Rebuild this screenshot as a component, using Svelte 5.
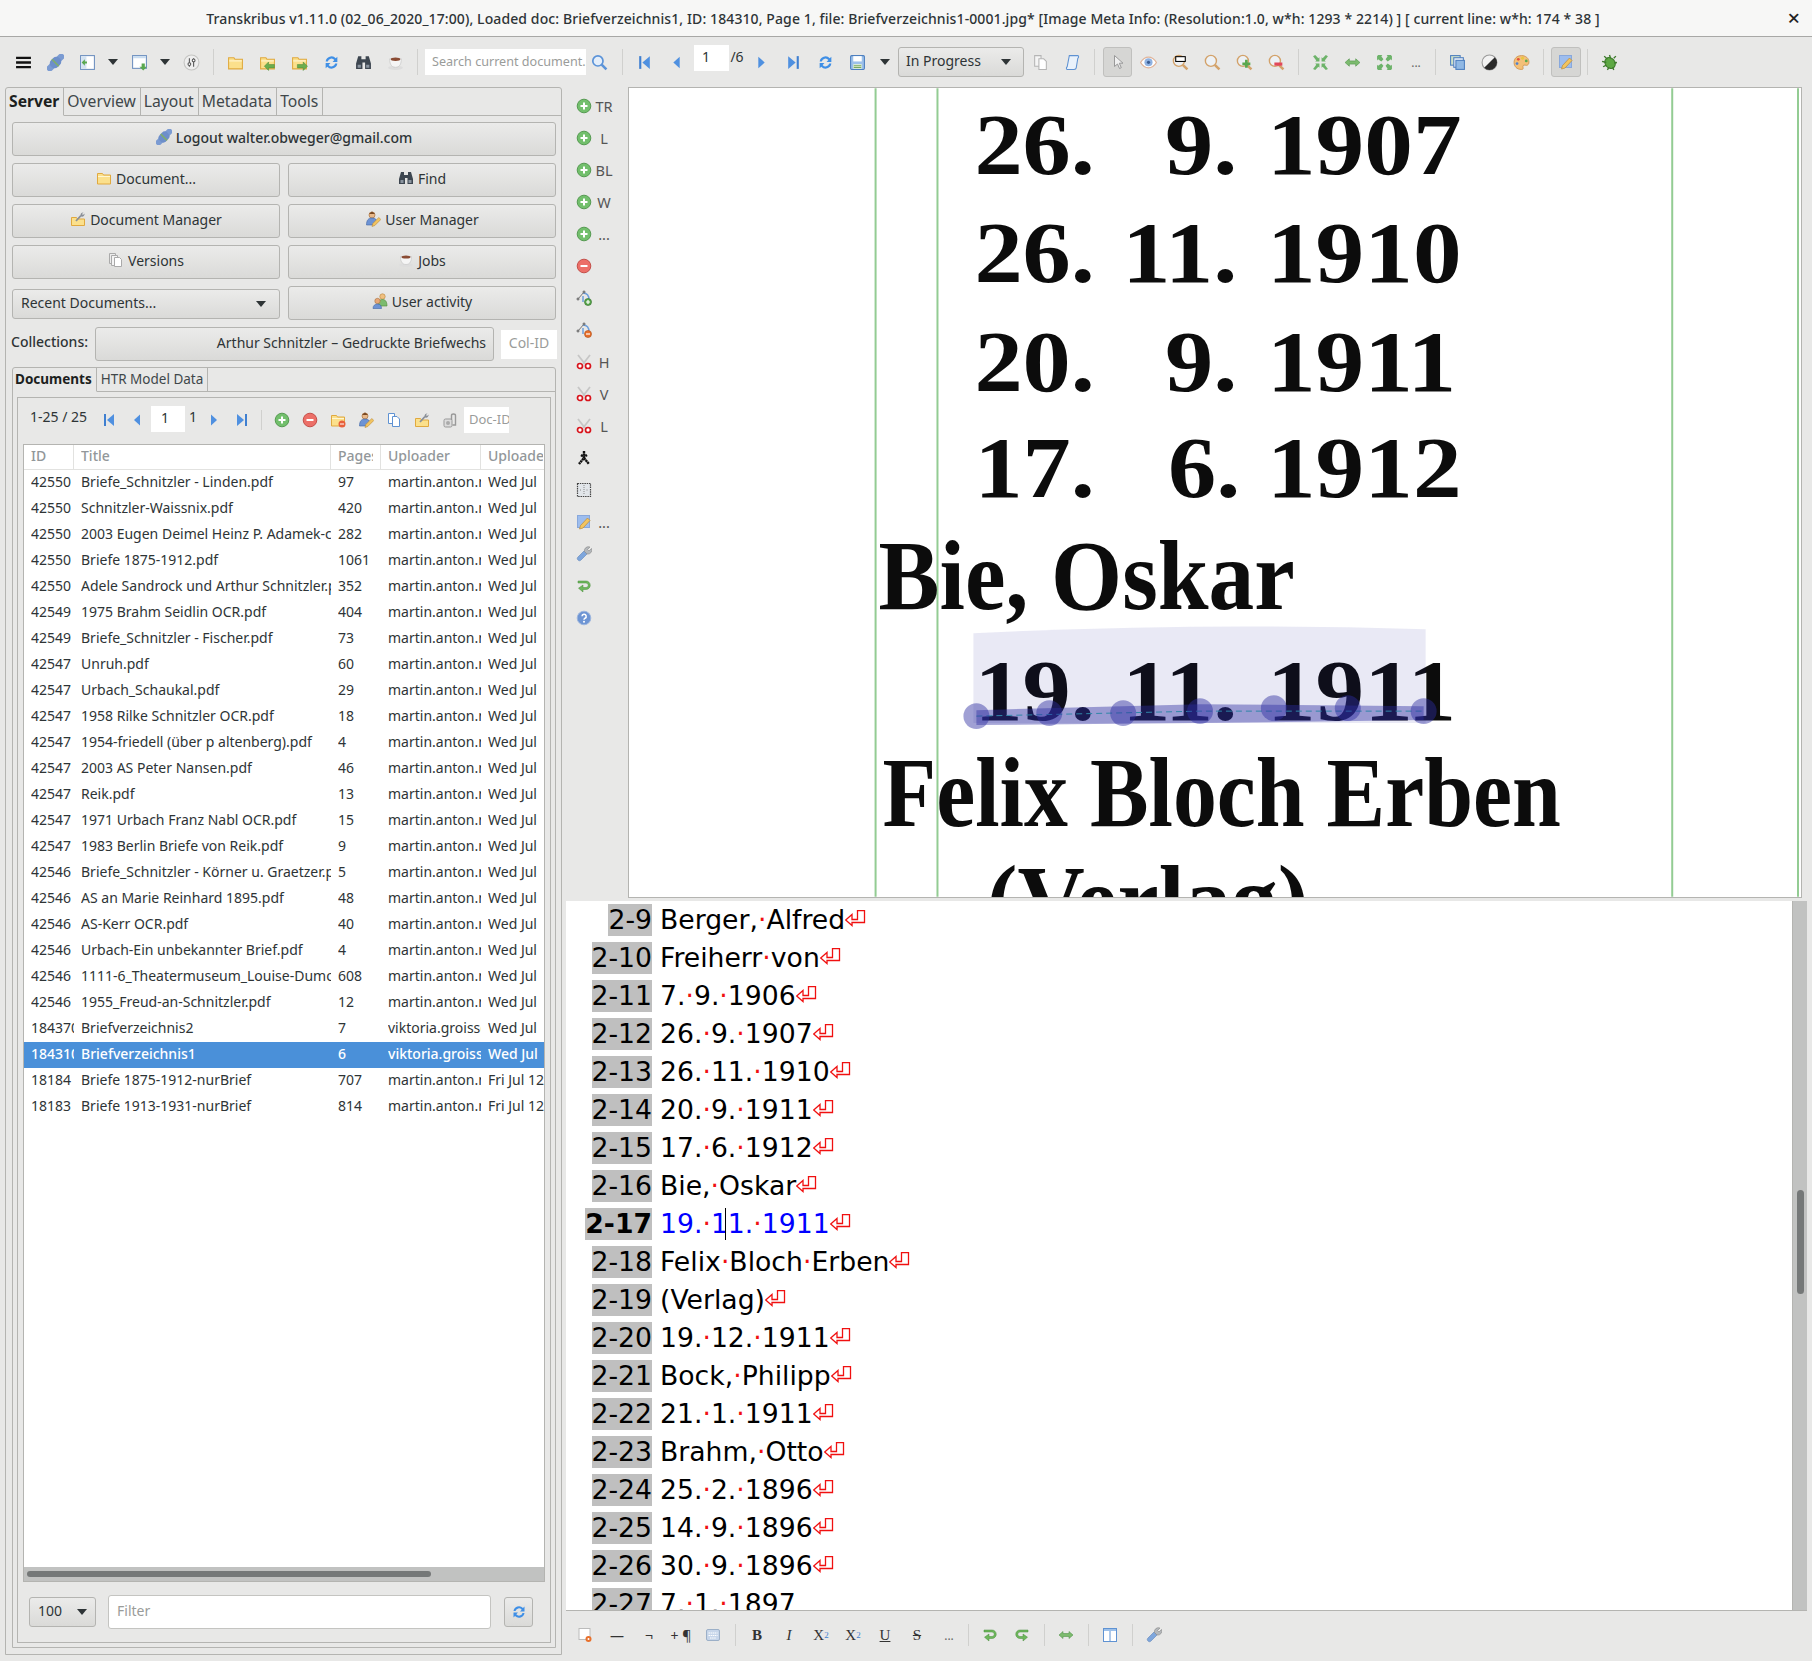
<script>
  const up = 'martin.anton.müller';
  const docs = [
    ['42550', 'Briefe_Schnitzler - Linden.pdf', '97', up, 'Wed Jul'],
    ['42550', 'Schnitzler-Waissnix.pdf', '420', up, 'Wed Jul'],
    ['42550', '2003 Eugen Deimel Heinz P. Adamek-comp.pdf', '282', up, 'Wed Jul'],
    ['42550', 'Briefe 1875-1912.pdf', '1061', up, 'Wed Jul'],
    ['42550', 'Adele Sandrock und Arthur Schnitzler.pdf', '352', up, 'Wed Jul'],
    ['42549', '1975 Brahm Seidlin OCR.pdf', '404', up, 'Wed Jul'],
    ['42549', 'Briefe_Schnitzler - Fischer.pdf', '73', up, 'Wed Jul'],
    ['42547', 'Unruh.pdf', '60', up, 'Wed Jul'],
    ['42547', 'Urbach_Schaukal.pdf', '29', up, 'Wed Jul'],
    ['42547', '1958 Rilke Schnitzler OCR.pdf', '18', up, 'Wed Jul'],
    ['42547', '1954-friedell (über p altenberg).pdf', '4', up, 'Wed Jul'],
    ['42547', '2003 AS Peter Nansen.pdf', '46', up, 'Wed Jul'],
    ['42547', 'Reik.pdf', '13', up, 'Wed Jul'],
    ['42547', '1971 Urbach Franz Nabl OCR.pdf', '15', up, 'Wed Jul'],
    ['42547', '1983 Berlin Briefe von Reik.pdf', '9', up, 'Wed Jul'],
    ['42546', 'Briefe_Schnitzler - Körner u. Graetzer.pdf', '5', up, 'Wed Jul'],
    ['42546', 'AS an Marie Reinhard 1895.pdf', '48', up, 'Wed Jul'],
    ['42546', 'AS-Kerr OCR.pdf', '40', up, 'Wed Jul'],
    ['42546', 'Urbach-Ein unbekannter Brief.pdf', '4', up, 'Wed Jul'],
    ['42546', '1111-6_Theatermuseum_Louise-Dumont.pdf', '608', up, 'Wed Jul'],
    ['42546', '1955_Freud-an-Schnitzler.pdf', '12', up, 'Wed Jul'],
    ['184370', 'Briefverzeichnis2', '7', 'viktoria.groiss@gmail', 'Wed Jul'],
    ['184310', 'Briefverzeichnis1', '6', 'viktoria.groiss@gmail', 'Wed Jul'],
    ['18184', 'Briefe 1875-1912-nurBrief', '707', up, 'Fri Jul 12'],
    ['18183', 'Briefe 1913-1931-nurBrief', '814', up, 'Fri Jul 12']
  ];

  const lines = [
    ['2-9', 'Berger, Alfred'], ['2-10', 'Freiherr von'], ['2-11', '7. 9. 1906'], ['2-12', '26. 9. 1907'],
    ['2-13', '26. 11. 1910'], ['2-14', '20. 9. 1911'], ['2-15', '17. 6. 1912'], ['2-16', 'Bie, Oskar'],
    ['2-17', '19. 11. 1911'], ['2-18', 'Felix Bloch Erben'], ['2-19', '(Verlag)'], ['2-20', '19. 12. 1911'],
    ['2-21', 'Bock, Philipp'], ['2-22', '21. 1. 1911'], ['2-23', 'Brahm, Otto'], ['2-24', '25. 2. 1896'],
    ['2-25', '14. 9. 1896'], ['2-26', '30. 9. 1896'], ['2-27', '7. 1. 1897']
  ];

  const sideTools = [
    ['add', 'TR'], ['add', 'L'], ['add', 'BL'], ['add', 'W'], ['add', '...'], ['rem', ''],
    ['pt-add', ''], ['pt-rem', ''], ['cut', 'H'], ['cut', 'V'], ['cut', 'L'], ['tree', ''],
    ['box', ''], ['edit', '...'], ['wrench', ''], ['undo', ''], ['help', '']
  ];

  const dates = [
    [173, '26.', 1165, '9.', '1907'],
    [281, '26.', 1122, '11.', '1910'],
    [390, '20.', 1165, '9.', '1911'],
    [497, '17.', 1168, '6.', '1912'],
    [720, '19.', 1122, '11.', '1911']
  ];
  const knots = [[976, 716], [1049, 713], [1123, 713], [1200, 711], [1274, 708], [1348, 708], [1424, 711]];
</script>

{#snippet ic(name)}
  <svg class="ic" viewBox="0 0 16 16"><use href={`#${name}`} /></svg>
{/snippet}

{#snippet tool(name)}
  <span class="tool">{@render ic(name)}</span>
{/snippet}

<svg class="defs" width="0" height="0">
  <defs>
    <symbol id="menu" viewBox="0 0 16 16"><path d="M1 2.500h14v2.200H1zM1 6.900h14v2.200H1zM1 11.300h14v2.200H1z" fill="#111" /></symbol>
    <symbol id="plug" viewBox="0 0 16 16"><g transform="rotate(-45 8 8)"><rect x="-2.500" y="5" width="21" height="6" rx="3" fill="#7b9bd2" /><rect x="2.500" y="3.500" width="11" height="9" rx="4" fill="#6d8fca" /><rect x="7" y="3.500" width="1.600" height="9" fill="#7fae6c" /></g></symbol>
    <symbol id="pane-in" viewBox="0 0 16 16"><rect x="1.500" y="1.500" width="13" height="13" fill="#fff" stroke="#6d8fbf" /><rect x="2" y="2" width="5" height="12" fill="#d5e3f2" /><path d="M2.500 8l3-3v2h2v2h-2v2z" fill="#5aa84f" /></symbol>
    <symbol id="pane-down" viewBox="0 0 16 16"><rect x="1.500" y="1.500" width="13" height="12" fill="#fff" stroke="#6d8fbf" /><rect x="2" y="2" width="12" height="2" fill="#c9dcf0" /><path d="M10 9h3v3h2l-3.500 3.600L8 12h2z" fill="#5aa84f" /></symbol>
    <symbol id="dials" viewBox="0 0 16 16"><circle cx="8" cy="8" r="7" fill="#eee" stroke="#c4c4c2" /><path d="M6 4v8M10 4v8" stroke="#555" /><circle cx="6" cy="9.500" r="1.300" fill="#fff" stroke="#555" /><circle cx="10" cy="6" r="1.300" fill="#fff" stroke="#555" /></symbol>
    <g id="g-folder"><path d="M1.500 3.500h5l1 1.500h7v9h-13z" fill="#fbe08c" stroke="#e0a93f" /><path d="M2 6.500h12" stroke="#fff6d2" /></g>
    <symbol id="folder" viewBox="0 0 16 16"><use href="#g-folder" /></symbol>
    <symbol id="folder-in" viewBox="0 0 16 16"><use href="#g-folder" /><path d="M5 11.500l4-4v2.400h5.500v3.200H9v2.400z" fill="#6cae4e" stroke="#4f8a38" stroke-width=".5" /></symbol>
    <symbol id="folder-out" viewBox="0 0 16 16"><use href="#g-folder" /><path d="M15.500 11.500l-4-4v2.400H6v3.200h5.500v2.400z" fill="#6cae4e" stroke="#4f8a38" stroke-width=".5" /></symbol>
    <symbol id="folder-del" viewBox="0 0 16 16"><use href="#g-folder" /><circle cx="12" cy="12" r="3.500" fill="#e8603c" /><path d="M10 12h4" stroke="#fff" /></symbol>
    <symbol id="folder-tool" viewBox="0 0 16 16"><path d="M1.500 6.500h5l1 1.500h7v6.500h-13z" fill="#fbe08c" stroke="#e0a93f" /><path d="M6 10l5-5.500" stroke="#8a8f98" stroke-width="1.800" /><path d="M10.500 4a2.500 2.500 0 0 1 3-2.500l-1.500 1.500 1 1 1.500-1.500a2.500 2.500 0 0 1-3.200 3z" fill="#8a8f98" /></symbol>
    <symbol id="refresh" viewBox="0 0 16 16"><path d="M2.500 7a5.500 5.500 0 0 1 9.500-3l1.500-1.500V7.500H9l1.700-1.800A3.500 3.500 0 0 0 4.500 7z" fill="#3f8fe6" /><path d="M13.500 9a5.500 5.500 0 0 1-9.500 3l-1.500 1.500V8.500H7l-1.700 1.800a3.500 3.500 0 0 0 6.200-1.300z" fill="#3f8fe6" /></symbol>
    <symbol id="binoc" viewBox="0 0 16 16"><path d="M3 2h3v3h4V2h3l2 7v5h-5.500V8H7v6H1V9z" fill="#3d4650" /><path d="M2.500 10h3v3h-3zM10.500 10h3v3h-3z" fill="#8b95a0" /></symbol>
    <symbol id="cup" viewBox="0 0 16 16"><ellipse cx="8" cy="13" rx="7" ry="2" fill="#ddd" /><path d="M2.500 4.500h11c0 4-1 8-5.500 8s-5.500-4-5.500-8z" fill="#f5f5f5" stroke="#c8c8c8" stroke-width=".7" /><ellipse cx="8" cy="5" rx="4.500" ry="1.600" fill="#8a4b33" /></symbol>
    <symbol id="search" viewBox="0 0 16 16"><circle cx="6.500" cy="6.500" r="4.800" fill="#e4eefa" stroke="#5b93d8" stroke-width="1.600" /><path d="M10 10l4.500 4.500" stroke="#5b93d8" stroke-width="2.400" /></symbol>
    <symbol id="first" viewBox="0 0 16 16"><path d="M3 2h2v12H3z" fill="#3f7fd0" /><path d="M13 2v12L6 8z" fill="#4f90e0" /></symbol>
    <symbol id="prev" viewBox="0 0 16 16"><path d="M11 2.500v11L5 8z" fill="#4f90e0" /></symbol>
    <symbol id="next" viewBox="0 0 16 16"><path d="M5 2.500v11L11 8z" fill="#4f90e0" /></symbol>
    <symbol id="last" viewBox="0 0 16 16"><path d="M11 2h2v12h-2z" fill="#3f7fd0" /><path d="M3 2v12l7-6z" fill="#4f90e0" /></symbol>
    <symbol id="save" viewBox="0 0 16 16"><rect x="1.500" y="1.500" width="13" height="13" rx="1" fill="#9cc0ea" stroke="#4d7fbf" /><rect x="4" y="2" width="8" height="5" fill="#fff" /><rect x="4" y="9.500" width="8" height="4.500" fill="#dfeed5" /><path d="M4.500 11h7M4.500 12.700h7" stroke="#78a860" /></symbol>
    <symbol id="pages" viewBox="0 0 16 16"><path d="M2.500 1.500h6v10h-6z" fill="#f5f5f5" stroke="#b5b5b5" /><path d="M6.500 4.500h4.500l2.500 2.500v7.500h-7z" fill="#fff" stroke="#b5b5b5" /></symbol>
    <symbol id="pages-b" viewBox="0 0 16 16"><path d="M2.500 1.500h6v10h-6z" fill="#fff" stroke="#5f92d2" /><path d="M6.500 4.500h4.500l2.500 2.500v7.500h-7z" fill="#fff" stroke="#5f92d2" /></symbol>
    <symbol id="page" viewBox="0 0 16 16"><path d="M5 1.500h8c1 0 1 2 0 2.500l-1.500 9c-.2 1.500-1 1.500-2 1.500H3c-1 0-1-2 0-2.500z" fill="#eaf2fb" stroke="#5f92d2" /></symbol>
    <symbol id="cursor" viewBox="0 0 16 16"><path d="M4.500 1.500v11l3-2.500 2 4.500 1.800-.8-2-4.500h3.700z" fill="#f0f0f0" stroke="#999" /></symbol>
    <symbol id="eye" viewBox="0 0 16 16"><path d="M.5 8C3 4 6 3 8 3s5 1 7.500 5C13 12 10 13 8 13s-5-1-7.500-5z" fill="#fff" stroke="#e0b49a" stroke-width="1.200" /><circle cx="8" cy="7.800" r="3.800" fill="#8fb2e2" /><circle cx="8" cy="7.800" r="1.500" fill="#3a5c92" /></symbol>
    <g id="g-glass"><circle cx="6.500" cy="6.500" r="5.200" fill="#edf1f5" stroke="#d3a26a" stroke-width="1.300" /><path d="M10.200 10.200l4.300 4.300" stroke="#d3a26a" stroke-width="2.400" /></g>
    <symbol id="glass" viewBox="0 0 16 16"><use href="#g-glass" /></symbol>
    <symbol id="glass-rect" viewBox="0 0 16 16"><use href="#g-glass" /><rect x="3.500" y="2.500" width="9" height="4.500" fill="#fff" stroke="#000" /></symbol>
    <symbol id="glass-plus" viewBox="0 0 16 16"><use href="#g-glass" /><path d="M6 8h2.500V5.500H11V8h2.500v2.500H11V13H8.500v-2.500H6z" fill="#5aa84f" /></symbol>
    <symbol id="glass-minus" viewBox="0 0 16 16"><use href="#g-glass" /><rect x="6" y="8" width="7.500" height="3" fill="#e2485a" /></symbol>
    <symbol id="fit" viewBox="0 0 16 16"><path d="M1 2l2-1 3 3 1-1v4H3l1-1zM15 2l-2-1-3 3-1-1v4h4l-1-1zM1 14l2 1 3-3 1 1V9H3l1 1zM15 14l-2 1-3-3-1 1V9h4l-1 1z" fill="#6db36a" /></symbol>
    <symbol id="fit-w" viewBox="0 0 16 16"><path d="M1 8l4-3.500v2h6v-2L15 8l-4 3.500v-2H5v2z" fill="#7cbb6e" stroke="#55964e" stroke-width=".6" /></symbol>
    <symbol id="fit-out" viewBox="0 0 16 16"><path d="M2 1h4L5 2l2 3-2 2-3-2-1 1V2zM14 1h-4l1 1-2 3 2 2 3-2 1 1V2zM2 15h4l-1-1 2-3-2-2-3 2-1-1v4zM14 15h-4l1-1-2-3 2-2 3 2 1-1v4z" fill="#6db36a" /></symbol>
    <symbol id="layers" viewBox="0 0 16 16"><rect x="1.500" y="1.500" width="9" height="9" fill="#cfe0c8" stroke="#4d7fbf" /><rect x="4.500" y="3.500" width="9" height="9" fill="#e8eef8" stroke="#4d7fbf" /><rect x="6.500" y="6" width="8" height="8.500" fill="#90b8e4" stroke="#4d7fbf" /></symbol>
    <symbol id="contrast" viewBox="0 0 16 16"><circle cx="8" cy="8" r="7" fill="#f2f2f2" stroke="#999" /><path d="M13 3a7 7 0 0 1-10 10z" fill="#2a2a2a" /></symbol>
    <symbol id="palette" viewBox="0 0 16 16"><path d="M8 1.500c4 0 7 2.500 7 6 0 3-2 3.500-3.500 3-2-.5-2.500 1-2 2.500.5 1.500-1 1.500-2 1.500-4 0-6.500-3-6.500-6.500S3.500 1.500 8 1.500z" fill="#f3c078" stroke="#c98a40" stroke-width=".7" /><circle cx="5" cy="5" r="1.300" fill="#e2503c" /><circle cx="9" cy="4" r="1.300" fill="#e8c83c" /><circle cx="12.500" cy="6.500" r="1.300" fill="#5aa84f" /><circle cx="3.800" cy="9" r="1.300" fill="#4f80d0" /></symbol>
    <symbol id="edit" viewBox="0 0 16 16"><rect x="1.500" y="1.500" width="12" height="12" fill="#9dbdee" stroke="#88a8dc" /><path d="M3.500 15l1-3.500 7-7.500 2.500 2.500-7 7.500z" fill="#f2c460" stroke="#b98a3a" stroke-width=".7" /></symbol>
    <symbol id="bug" viewBox="0 0 16 16"><ellipse cx="8.500" cy="8.500" rx="4.500" ry="5.500" transform="rotate(-40 8.500 8.500)" fill="#5da843" stroke="#3e7a2c" /><path d="M1 7l4 1M3 2l3 3M8 1l1 3M2 12l3-1.500M6 15l1.500-2.500M14 2l-2 2M15 8l-2.500.5M12 15l-1-2.500" stroke="#3e7a2c" stroke-width="1.300" /></symbol>
    <symbol id="add" viewBox="0 0 16 16"><circle cx="8" cy="8" r="6.800" fill="#72bf6c" stroke="#569a52" /><path d="M4.500 8h7M8 4.500v7" stroke="#fff" stroke-width="2" /></symbol>
    <symbol id="rem" viewBox="0 0 16 16"><circle cx="8" cy="8" r="6.800" fill="#ec6f68" stroke="#c44f4a" /><path d="M4.500 8h7" stroke="#fff" stroke-width="2" /></symbol>
    <symbol id="pt-add" viewBox="0 0 16 16"><path d="M2 9l6-7" stroke="#777" /><path d="M7 3c4 0 6 3 6 7" fill="none" stroke="#6d9fdc" stroke-width="1.500" /><path d="M7 6v6" stroke="#6d9fdc" stroke-width="1.500" /><circle cx="2" cy="9" r="1" fill="#fff" stroke="#555" /><circle cx="8" cy="2" r="1" fill="#fff" stroke="#555" /><circle cx="12" cy="12" r="3.500" fill="#5aa84f" stroke="#2c6a24" stroke-width=".6" /><path d="M10 12h4M12 10v4" stroke="#fff" stroke-width="1.200" /></symbol>
    <symbol id="pt-rem" viewBox="0 0 16 16"><path d="M2 9l6-7" stroke="#777" /><path d="M7 3c4 0 6 3 6 7" fill="none" stroke="#6d9fdc" stroke-width="1.500" /><path d="M7 6v6" stroke="#6d9fdc" stroke-width="1.500" /><circle cx="2" cy="9" r="1" fill="#fff" stroke="#555" /><circle cx="8" cy="2" r="1" fill="#fff" stroke="#555" /><circle cx="12" cy="12" r="3.500" fill="#e8702c" stroke="#a84a18" stroke-width=".6" /><path d="M10 12h4" stroke="#fff" stroke-width="1.200" /></symbol>
    <symbol id="cut" viewBox="0 0 16 16"><path d="M2 1l7 9M14 1L7 10" stroke="#c6c6c6" stroke-width="1.800" /><circle cx="4" cy="12" r="2.500" fill="#fff" stroke="#d8141c" stroke-width="1.700" /><circle cx="12" cy="12" r="2.500" fill="#fff" stroke="#d8141c" stroke-width="1.700" /></symbol>
    <symbol id="tree" viewBox="0 0 16 16"><path d="M8 1v7L3 14M8 8l5 6M5 5l3 2 3-2" fill="none" stroke="#111" stroke-width="2.400" stroke-dasharray="2.200 .4" /></symbol>
    <symbol id="box" viewBox="0 0 16 16"><rect x="1.500" y="1.500" width="13" height="13" fill="#e2e6ea" stroke="#444" stroke-width="1.200" stroke-dasharray="1.500 .8" /><path d="M8 3v10M4 8h1.500M10.500 8H12" stroke="#888" stroke-dasharray="1 1" /></symbol>
    <symbol id="wrench" viewBox="0 0 16 16"><path d="M2 14c-1-1-1-2 0-3l6-6 3 3-6 6c-1 1-2 1-3 0z" fill="#7ea6dc" stroke="#5f84b8" stroke-width=".6" /><path d="M8.500 5.500a4 4 0 0 1 5.500-4.500l-2.500 2.500 1.500 1.500 2.500-2.500a4 4 0 0 1-4.500 5.500z" fill="#b4b8bc" stroke="#888" stroke-width=".6" /></symbol>
    <symbol id="undo" viewBox="0 0 16 16"><path d="M2 3h8a3.500 3.500 0 0 1 0 8.500H7V14L2.500 10.200 7 7v2.500h3a1.700 1.700 0 0 0 0-4.500H2z" fill="#6db85c" stroke="#4a8c3c" stroke-width=".5" /></symbol>
    <symbol id="redo" viewBox="0 0 16 16"><path d="M14 3H6a3.500 3.500 0 0 0 0 8.500h3V14l4.500-3.800L9 7v2.500H6a1.700 1.700 0 0 1 0-4.500h8z" fill="#6db85c" stroke="#4a8c3c" stroke-width=".5" /></symbol>
    <symbol id="help" viewBox="0 0 16 16"><circle cx="8" cy="8" r="6.800" fill="#6e95d4" stroke="#9db6de" /><path d="M6 6.200a2.100 2.100 0 1 1 3 2c-.8.4-1 .8-1 1.600" fill="none" stroke="#fff" stroke-width="1.500" /><circle cx="8" cy="11.700" r="1" fill="#fff" /></symbol>
    <symbol id="user-edit" viewBox="0 0 16 16"><circle cx="7" cy="4" r="3" fill="#e8b88a" stroke="#a8703c" stroke-width=".7" /><path d="M4 3l3-2.500L10 3z" fill="#7a4a24" /><path d="M1.500 14c0-5 2-7 5.500-7s5 2 5 4l-3 3z" fill="#6d93d4" stroke="#3f64a4" stroke-width=".6" /><path d="M7 15.500l.8-3 6-6 2 2-6 6z" fill="#f2c460" stroke="#b98a3a" stroke-width=".6" /></symbol>
    <symbol id="users" viewBox="0 0 16 16"><circle cx="10.500" cy="3.500" r="2.700" fill="#f0c080" stroke="#b8843c" stroke-width=".6" /><path d="M6 13c0-5 2-6.500 4.500-6.500S15 8 15 13z" fill="#7cbb6e" stroke="#4f8a38" stroke-width=".6" /><circle cx="5.500" cy="8" r="2.700" fill="#e8a878" stroke="#a8703c" stroke-width=".6" /><path d="M1 15.500c0-3 2-4.500 4.500-4.500s4 1.500 4 4.500z" fill="#6d93d4" stroke="#3f64a4" stroke-width=".6" /></symbol>
    <symbol id="versions" viewBox="0 0 16 16"><path d="M1.500 1.500h6v10h-6z" fill="#ececec" stroke="#aaa" /><path d="M3.500 3.500h6v10h-6z" fill="#f4f4f4" stroke="#aaa" /><path d="M6.500 5.500h5l2 2v7h-7z" fill="#fff" stroke="#aaa" /></symbol>
    <symbol id="lock" viewBox="0 0 16 16"><rect x="2" y="7" width="8" height="8" rx="1.500" fill="#dcdcdc" stroke="#999" /><circle cx="6" cy="11" r="2" fill="#aaa" /><path d="M9.500 8V3.500c0-2 4-2 4 0V13h-3" fill="none" stroke="#999" stroke-width="1.400" /></symbol>
    <symbol id="keyb" viewBox="0 0 16 16"><rect x="1.500" y="2.500" width="13" height="11" rx="1.500" fill="#c7d6ea" stroke="#9cb0c8" /><path d="M3.500 6h9M3.500 8.500h9M5 11h6" stroke="#fff" stroke-width="1.200" stroke-dasharray="1.500 .6" /></symbol>
    <symbol id="page-stop" viewBox="0 0 16 16"><rect x="2" y="1.500" width="11" height="11" fill="#fff" stroke="#bbb" /><circle cx="11.500" cy="12" r="3" fill="#e8702c" /><circle cx="11.500" cy="12" r="1" fill="#fff" /></symbol>
    <symbol id="split" viewBox="0 0 16 16"><rect x="1.500" y="1.500" width="13" height="13" fill="#fff" stroke="#5f92d2" /><rect x="2" y="2" width="12" height="2" fill="#9cc0ea" /><path d="M8 4v10" stroke="#5f92d2" /></symbol>
  </defs>
</svg>

<div class="app">
  <header class="title">
    <span class="title-text">Transkribus v1.11.0 (02_06_2020_17:00), Loaded doc: Briefverzeichnis1, ID: 184310, Page 1, file: Briefverzeichnis1-0001.jpg* [Image Meta Info: (Resolution:1.0, w*h: 1293 * 2214) ] [ current line: w*h: 174 * 38 ]</span>
    <span class="close">×</span>
  </header>

  <div class="toolbar">
    {@render tool('menu')}
    {@render tool('plug')}
    {@render tool('pane-in')}
    <span class="drop"></span>
    {@render tool('pane-down')}
    <span class="drop"></span>
    {@render tool('dials')}
    <span class="sep"></span>
    {@render tool('folder')}
    {@render tool('folder-in')}
    {@render tool('folder-out')}
    {@render tool('refresh')}
    {@render tool('binoc')}
    {@render tool('cup')}
    <span class="sep"></span>
    <span class="field search">Search current document..</span>
    <span class="tool search-btn">{@render ic('search')}</span>
    <span class="sep"></span>
    {@render tool('first')}
    {@render tool('prev')}
    <span class="field page-no">1</span>
    <span class="of">/6</span>
    {@render tool('next')}
    {@render tool('last')}
    {@render tool('refresh')}
    {@render tool('save')}
    <span class="drop small"></span>
    <span class="btn status">In Progress<span class="drop inline"></span></span>
    {@render tool('pages')}
    {@render tool('page')}
    <span class="sep"></span>
    <span class="btn toggled first-toggle">{@render ic('cursor')}</span>
    {@render tool('eye')}
    {@render tool('glass-rect')}
    {@render tool('glass')}
    {@render tool('glass-plus')}
    {@render tool('glass-minus')}
    <span class="sep"></span>
    {@render tool('fit')}
    {@render tool('fit-w')}
    {@render tool('fit-out')}
    <span class="tool more">...</span>
    <span class="sep tight"></span>
    {@render tool('layers')}
    {@render tool('contrast')}
    {@render tool('palette')}
    <span class="sep"></span>
    <span class="btn toggled second-toggle">{@render ic('edit')}</span>
    <span class="sep"></span>
    {@render tool('bug')}
  </div>

  <main class="work">
    <section class="left">
      <nav class="tabs">
        <span class="tab on">Server</span><span class="tab">Overview</span><span class="tab">Layout</span><span class="tab">Metadata</span><span class="tab">Tools</span>
      </nav>

      <div class="actions">
        <button class="btn wide">{@render ic('plug')}<b>Logout walter.obweger@gmail.com</b></button>
        <div class="pair">
          <button class="btn">{@render ic('folder')}Document...</button>
          <button class="btn">{@render ic('binoc')}Find</button>
        </div>
        <div class="pair">
          <button class="btn">{@render ic('folder-tool')}Document Manager</button>
          <button class="btn">{@render ic('user-edit')}User Manager</button>
        </div>
        <div class="pair">
          <button class="btn">{@render ic('versions')}Versions</button>
          <button class="btn">{@render ic('cup')}Jobs</button>
        </div>
        <div class="pair">
          <span class="btn recent">Recent Documents...<span class="drop inline"></span></span>
          <button class="btn">{@render ic('users')}User activity</button>
        </div>
        <div class="coll">
          <b>Collections:</b>
          <span class="btn coll-btn"><span>Arthur Schnitzler – Gedruckte Briefwechs</span></span>
          <span class="field col-id">Col-ID</span>
        </div>
      </div>

      <div class="sub">
        <nav class="tabs subtabs">
          <span class="tab on">Documents</span><span class="tab">HTR Model Data</span>
        </nav>
        <div class="inner">
          <div class="pager">
            <span class="range">1-25 / 25</span>
            <span class="pg">{@render ic('first')}</span>
            <span class="pg">{@render ic('prev')}</span>
            <span class="field pg-input">1</span>
            <span class="pg-total">1</span>
            <span class="pg">{@render ic('next')}</span>
            <span class="pg">{@render ic('last')}</span>
            <span class="sep"></span>
            <span class="pg">{@render ic('add')}</span>
            <span class="pg">{@render ic('rem')}</span>
            <span class="pg">{@render ic('folder-del')}</span>
            <span class="pg">{@render ic('user-edit')}</span>
            <span class="pg">{@render ic('pages-b')}</span>
            <span class="pg">{@render ic('folder-tool')}</span>
            <span class="pg">{@render ic('lock')}</span>
            <span class="field doc-id">Doc-ID</span>
          </div>

          <div class="table">
            <div class="row head">
              <span>ID</span><span>Title</span><span>Pages</span><span>Uploader</span><span>Uploaded</span>
            </div>
            <div class="rows">
              {#each docs as d, i}
                <div class="row" class:sel={i === 22}>
                  {#each d as cell}<span>{cell}</span>{/each}
                </div>
              {/each}
            </div>
            <div class="hbar"><span class="thumb"></span></div>
          </div>

          <div class="foot">
            <span class="btn size">100<span class="drop inline"></span></span>
            <span class="field filter">Filter</span>
            <button class="btn reload">{@render ic('refresh')}</button>
          </div>
        </div>
      </div>
    </section>

    <aside class="side">
      {#each sideTools as [icon, label]}
        <div class="side-item">{@render ic(icon)}<span>{label}</span></div>
      {/each}
    </aside>

    <section class="canvas">
      <svg class="scan" viewBox="628 87 1174 810">
        <path d="M875 87v810M937 87v810M1673 87v810M1799 87v810" stroke="#93cc93" stroke-width="2" fill="none" />
        <g class="ink">
          {#each dates as [y, a, x2, b, c]}
            <text transform={`translate(974 ${y}) scale(1.05 .95)`}>{a}</text>
            <text transform={`translate(${x2} ${y}) scale(1.05 .95)`}>{b}</text>
            <text transform={`translate(1267 ${y}) scale(1.06 .95)`}>{c}</text>
          {/each}
          <text class="big" transform="translate(878 609) scale(1.04 1.14)">Bie, Oskar</text>
          <text class="big" transform="translate(882 826) scale(1 1.14)">Felix Bloch Erben</text>
          <text class="big" transform="translate(986 934) scale(1.06 1.14)">(Verlag)</text>
        </g>
        <path d="M973 633Q1200 622 1426 629V723H973z" fill="#2c2ca0" fill-opacity=".1" />
        <path d="M976 710L1200 704 1424 706V720L1200 723 976 725z" fill="#2c2ca0" fill-opacity=".42" />
        <path d="M976 716L1200 711 1424 711" stroke="#2f86a8" stroke-dasharray="6 4" fill="none" />
        {#each knots as [x, y]}
          <circle cx={x} cy={y} r="13" fill="#2c2ca0" fill-opacity=".45" />
        {/each}
      </svg>
    </section>

    <section class="editor">
      <div class="text">
        {#each lines as [no, text], n}
          <div class="line" class:cur={no === '2-17'}>
            <span class="gutter"><span>{no}</span></span>
            <span class="content">
              {#each text.split(' ') as word, w}{#if w > 0}<span class="dot">·</span>{/if}{word}{/each}
              {#if no === '2-17'}<span class="caret"></span>{/if}
              {#if n < lines.length - 1}
                <svg class="ret" viewBox="0 0 21 19"><path d="M19.500.5h-7v9H7V4.500L.7 10 7 15.500V12.500h12.500z" fill="#fff" stroke="#f01010" stroke-width="1.300" /></svg>
              {/if}
            </span>
          </div>
        {/each}
      </div>
      <div class="vbar"><span class="vthumb"></span></div>
    </section>

    <div class="bottom">
      {@render tool('page-stop')}
      <span class="tool">—</span>
      <span class="tool">¬</span>
      <span class="tool">+ ¶</span>
      {@render tool('keyb')}
      <span class="sep"></span>
      <span class="tool fmt"><b>B</b></span>
      <span class="tool fmt"><i>I</i></span>
      <span class="tool fmt">X<sub>2</sub></span>
      <span class="tool fmt">X<sup>2</sup></span>
      <span class="tool fmt"><u>U</u></span>
      <span class="tool fmt"><s>S</s></span>
      <span class="tool more">...</span>
      <span class="sep tight"></span>
      {@render tool('undo')}
      {@render tool('redo')}
      <span class="sep"></span>
      {@render tool('fit-w')}
      <span class="sep"></span>
      {@render tool('split')}
      <span class="sep"></span>
      {@render tool('wrench')}
    </div>
  </main>
</div>

<style>
  :global(body) {
    margin: 0;
    background: #e8e8e7;
  }
  .defs {
    position: absolute;
  }
  .app {
    width: 1812px;
    height: 1661px;
    overflow: hidden;
    font-family: "Noto Sans", sans-serif;
    font-size: 14px;
    color: #2e3436;
    background: #e8e8e7;
    display: flex;
    flex-direction: column;
  }
  .title {
    height: 36px;
    flex: none;
    background: #f7f7f6;
    border-bottom: 1px solid #a8a8a6;
    display: flex;
    align-items: center;
    justify-content: center;
    position: relative;
    font-weight: 500;
  }
  .title-text {
    letter-spacing: 0.1px;
    white-space: nowrap;
    margin-left: -6px;
  }
  .close {
    position: absolute;
    right: 12px;
    top: 4px;
    font-size: 22px;
    line-height: 26px;
    color: #222;
  }
  .toolbar {
    height: 50px;
    flex: none;
    display: flex;
    align-items: center;
    padding-left: 7px;
    box-sizing: border-box;
  }
  .tool {
    width: 32px;
    flex: none;
    display: flex;
    align-items: center;
    justify-content: center;
  }
  .ic {
    width: 16px;
    height: 16px;
    flex: none;
  }
  .toolbar .tool .ic {
    width: 17px;
    height: 17px;
  }
  .drop {
    width: 20px;
    height: 6px;
    flex: none;
    display: flex;
    justify-content: center;
  }
  .drop::after {
    content: "";
    border: 5px solid transparent;
    border-top: 6px solid #2e3436;
    border-bottom: 0;
  }
  .drop.small {
    margin-left: 2px;
  }
  .drop.inline {
    width: auto;
    margin-left: auto;
    margin-top: 4px;
  }
  .sep {
    width: 1px;
    height: 26px;
    flex: none;
    margin: 0 5px 0 6px;
    background: #d0d0ce;
  }
  .sep.tight {
    margin-left: 3px;
  }
  .field {
    flex: none;
    box-sizing: border-box;
    background: #fff;
    display: flex;
    align-items: center;
    color: #9a9c9a;
    overflow: hidden;
    white-space: nowrap;
  }
  .search {
    width: 161px;
    height: 26px;
    margin-left: 2px;
    padding-left: 7px;
    padding-bottom: 2px;
    font-size: 12.6px;
  }
  .search-btn {
    width: 30px;
    padding-right: 4px;
    box-sizing: border-box;
  }
  .page-no {
    width: 35px;
    height: 26px;
    margin: -8px 0 0 2px;
    padding: 0 0 3px 8px;
    color: #2e3436;
  }
  .of {
    width: 16px;
    flex: none;
    margin-top: -11px;
    text-align: center;
  }
  .btn {
    box-sizing: border-box;
    font: inherit;
    color: inherit;
    background: linear-gradient(#ebebea, #dadad8);
    border: 1px solid #b4b4b1;
    border-radius: 3px;
    display: flex;
    align-items: center;
    justify-content: center;
    gap: 4px;
    padding: 0 0 4px 0;
    margin: 0;
    white-space: nowrap;
    min-width: 0;
  }
  .status {
    width: 126px;
    height: 30px;
    margin-left: 3px;
    flex: none;
    padding: 0 12px 4px 7px;
    justify-content: flex-start;
  }
  .toggled {
    height: 30px;
    flex: none;
    padding: 0;
    background: #d6d6d4;
    border-color: #c0c0be;
  }
  .first-toggle {
    width: 29px;
    margin-left: 3px;
  }
  .second-toggle {
    width: 30px;
    margin-left: 2px;
  }
  .more {
    color: #666;
    font-size: 12px;
  }
  .work {
    flex: 1;
    display: grid;
    grid-template-columns: 557px 66px 1174px 5px;
    grid-template-rows: 811px 713px 50px;
    padding-left: 5px;
    min-height: 0;
  }
  .left {
    grid-column: 1;
    grid-row: 1 / 4;
    box-sizing: border-box;
    height: 1568px;
    border: 1px solid #b4b4b1;
    border-radius: 3px 3px 0 0;
    display: flex;
    flex-direction: column;
    width: 557px;
  }
  .tabs {
    height: 27px;
    flex: none;
    display: flex;
    border-bottom: 1px solid #b4b4b1;
    font-size: 15.7px;
    line-height: 26px;
  }
  .tab {
    padding: 0 4px 0 3px;
    border-right: 1px solid #b4b4b1;
    color: #40474a;
  }
  .tab.on {
    font-weight: 700;
    color: #1c1f20;
    border-bottom: 1px solid #e8e8e7;
    height: 27px;
  }
  .actions {
    display: flex;
    flex-direction: column;
    gap: 7px;
    padding: 6px 6px 0 6px;
  }
  .wide {
    height: 34px;
    width: 544px;
  }
  .wide b {
    font-weight: 500;
  }
  .pair {
    display: grid;
    grid-template-columns: 268px 268px;
    column-gap: 8px;
    height: 34px;
  }
  .recent {
    height: 30px;
    align-self: center;
    justify-content: flex-start;
    padding: 0 13px 4px 8px;
    margin-top: 2px;
  }
  .coll {
    display: flex;
    align-items: center;
    height: 34px;
  }
  .coll b {
    width: 84px;
    flex: none;
    font-weight: 500;
    margin: -5px 0 0 -1px;
    white-space: nowrap;
  }
  .coll-btn {
    width: 399px;
    height: 34px;
    flex: none;
    justify-content: flex-end;
    overflow: hidden;
    padding-right: 7px;
  }
  .coll-btn span {
    white-space: nowrap;
  }
  .col-id {
    width: 56px;
    height: 29px;
    margin-left: 7px;
    padding-bottom: 4px;
    justify-content: center;
  }
  .sub {
    margin: 6px 5px 6px 6px;
    flex: 1;
    min-height: 0;
    border: 1px solid #b4b4b1;
    border-radius: 3px 3px 0 0;
    display: flex;
    flex-direction: column;
  }
  .subtabs {
    height: 23px;
    font-size: 13.5px;
    line-height: 22px;
  }
  .subtabs .tab {
    padding: 0 4px;
  }
  .subtabs .tab.on {
    height: 23px;
    padding: 0 4px 0 2px;
  }
  .inner {
    margin: 5px 4px 4px 4px;
    flex: 1;
    min-height: 0;
    border: 1px solid #b4b4b1;
    padding: 8px 5px 0 5px;
    display: flex;
    flex-direction: column;
  }
  .pager {
    height: 28px;
    flex: none;
    margin-bottom: 10px;
    display: flex;
    align-items: center;
    padding-left: 7px;
  }
  .range {
    width: 65px;
    flex: none;
    margin-top: -8px;
    white-space: nowrap;
  }
  .pg {
    width: 28px;
    flex: none;
    display: flex;
    justify-content: center;
  }
  .pg-input {
    width: 34px;
    height: 26px;
    margin-top: -2px;
    padding: 0 0 4px 10px;
    color: #2e3436;
  }
  .pg-total {
    width: 15px;
    flex: none;
    margin-top: -8px;
    text-align: center;
    padding-left: 1px;
    box-sizing: border-box;
  }
  .pager .sep {
    height: 20px;
    margin: 0 6px 0 5px;
  }
  .doc-id {
    width: 45px;
    height: 26px;
    padding: 0 0 2px 5px;
    font-size: 13px;
  }
  .table {
    flex: none;
    height: 1138px;
    background: #fff;
    border: 1px solid #b4b4b1;
    box-sizing: border-box;
    display: flex;
    flex-direction: column;
    overflow: hidden;
  }
  .row {
    display: grid;
    grid-template-columns: 50px 257px 50px 100px 70px;
    height: 26px;
    line-height: 23px;
    font-size: 14px;
    flex: none;
    width: 527px;
  }
  .row span {
    margin-left: 7px;
    overflow: hidden;
    white-space: nowrap;
  }
  .head {
    height: 24px;
    line-height: 21px;
    border-bottom: 1px solid #e2e2e0;
    color: #92979a;
    font-weight: 500;
  }
  .head span {
    margin: 0 8px 0 7px;
    box-shadow: 7px 0 0 #fff, 8px 0 0 #e2e2e0;
  }
  .sel {
    background: #4a90d9;
    color: #fff;
    font-weight: 500;
  }
  .rows {
    flex: 1;
    min-height: 0;
  }
  .hbar {
    height: 14px;
    flex: none;
    background: #c1c2c1;
    display: flex;
    align-items: center;
    padding-left: 3px;
  }
  .thumb {
    width: 404px;
    height: 6px;
    border-radius: 3px;
    background: #757878;
  }
  .foot {
    display: flex;
    align-items: center;
    height: 34px;
    margin-top: 13px;
  }
  .size {
    width: 67px;
    height: 30px;
    flex: none;
    margin-left: 6px;
    padding: 0 8px 4px 8px;
    justify-content: flex-start;
  }
  .filter {
    width: 383px;
    height: 34px;
    margin-left: 12px;
    border: 1px solid #c4c4c1;
    border-radius: 3px;
    padding: 0 0 4px 8px;
  }
  .reload {
    width: 29px;
    height: 30px;
    margin-left: 13px;
    flex: none;
    padding: 0;
  }
  .side {
    grid-column: 2;
    grid-row: 1;
    padding: 3px 0 0 11px;
    box-sizing: border-box;
  }
  .side-item {
    height: 32px;
    display: flex;
    align-items: center;
    padding-left: 3px;
  }
  .side-item span {
    width: 18px;
    margin-left: 3px;
    text-align: center;
    font-size: 14.5px;
    color: #555;
  }
  .canvas {
    grid-column: 3;
    grid-row: 1;
    background: #fff;
    box-sizing: border-box;
    height: 811px;
    border: 1px solid #b4b4b1;
    overflow: hidden;
  }
  .scan {
    display: block;
    width: 1172px;
    height: 809px;
  }
  .ink text {
    font-family: "Liberation Serif", serif;
    font-weight: 700;
    font-size: 92px;
    fill: #0c0c0c;
    filter: blur(0.7px);
  }
  .ink text.big {
    font-size: 88px;
  }
  .editor {
    grid-column: 2 / 5;
    grid-row: 2;
    margin: 3px 0 0 4px;
    height: 710px;
    background: #fff;
    display: flex;
    border-bottom: 1px solid #b4b4b1;
    box-sizing: border-box;
    font-family: "DejaVu Sans", sans-serif;
    font-size: 26.67px;
    color: #000;
  }
  .text {
    flex: 1;
    overflow: hidden;
    padding-top: 3px;
  }
  .line {
    height: 38px;
    display: flex;
  }
  .gutter {
    width: 86px;
    flex: none;
    text-align: right;
    line-height: 32px;
  }
  .gutter span {
    display: inline-block;
    height: 32px;
    background: #bfbfbf;
    white-space: nowrap;
  }
  .cur .gutter {
    font-weight: 700;
  }
  .content {
    margin-left: 8px;
    line-height: 32px;
    white-space: nowrap;
    position: relative;
    display: flex;
    align-items: flex-start;
  }
  .cur .content {
    color: #0000ff;
  }
  .dot {
    color: #f01010;
  }
  .caret {
    position: absolute;
    left: 65px;
    top: 0;
    width: 1px;
    height: 32px;
    background: #000;
  }
  .ret {
    width: 21px;
    height: 19px;
    margin-top: 6px;
    flex: none;
  }
  .vbar {
    width: 14px;
    flex: none;
    background: #c1c2c1;
    border-left: 1px solid #b4b4b1;
    position: relative;
  }
  .vthumb {
    position: absolute;
    left: 4px;
    top: 289px;
    width: 7px;
    height: 104px;
    border-radius: 4px;
    background: #757878;
  }
  .bottom {
    grid-column: 2 / 5;
    grid-row: 3;
    display: flex;
    align-items: center;
    padding: 0 0 2px 7px;
    box-sizing: border-box;
    font-size: 14px;
    color: #333;
  }
  .bottom .sep {
    height: 22px;
  }
  .fmt {
    font-family: "Liberation Serif", serif;
    font-size: 15px;
  }
  .fmt sub, .fmt sup {
    font-size: 9px;
    color: #3f7fd0;
    line-height: 0;
  }
</style>
